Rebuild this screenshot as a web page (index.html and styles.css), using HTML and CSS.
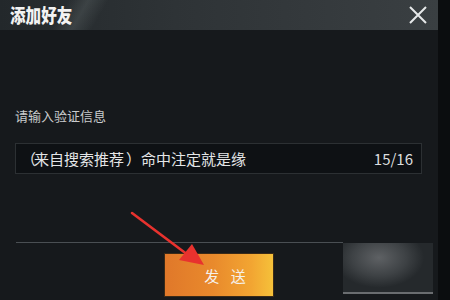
FILE: index.html
```html
<!DOCTYPE html>
<html lang="zh">
<head>
<meta charset="utf-8">
<link rel="stylesheet" href="styles.css">
</head>
<body>
<div class="dialog">
  <div class="header">
    <div class="stripe"></div>
    <span class="title">添加好友</span>
    <svg class="close" width="20" height="20" viewBox="0 0 20 20"><path d="M2 2 L18 18 M18 2 L2 18" stroke="#e6e8e9" stroke-width="2" fill="none"/></svg>
  </div>
  <div class="content">
    <div class="label">请输入验证信息</div>
    <div class="input">
      <div class="msg"><span class="po">（</span><span class="w1">来自搜索推荐</span><span class="pc">）</span><span class="w2">命中注定就是缘</span></div>
      <span class="count">15/16</span>
    </div>
  </div>
  <div class="footer">
    <div class="sep-row">
      <div class="sep"></div>
      <div class="blur"></div>
    </div>
    <div class="btn-row">
      <div class="btn">发&nbsp;送</div>
    </div>
  </div>
  <svg class="arrow" width="90" height="70" viewBox="0 0 90 70">
    <path d="M2 3 L58 45" stroke="#e8322e" stroke-width="2.6" stroke-linecap="round"/>
    <path d="M74 55 L49 50 L62 34 Z" fill="#e8322e"/>
  </svg>
</div>
</body>
</html>
```
FILE: styles.css
```css
html, body {
  margin: 0;
  padding: 0;
}
body {
  width: 450px;
  height: 300px;
  background: #0b0d0f;
  font-family: "Noto Sans CJK SC", "Noto Sans", sans-serif;
  overflow: hidden;
}
.dialog {
  position: relative;
  width: 438px;
  height: 300px;
  background: #16191c;
  display: flex;
  flex-direction: column;
}
.header {
  position: relative;
  height: 30px;
  background: linear-gradient(90deg, #23282b 0%, #2e3336 40%, #3a3f42 100%);
  display: flex;
  align-items: center;
  justify-content: space-between;
  padding: 0 10px 0 10px;
  overflow: hidden;
}
.stripe {
  position: absolute;
  left: 60px;
  top: 0;
  width: 40px;
  height: 30px;
  background: linear-gradient(90deg, rgba(255,255,255,0) 0%, rgba(120,130,130,0.25) 50%, rgba(255,255,255,0) 100%);
  transform: skewX(-30deg);
}
.title {
  position: relative;
  display: inline-block;
  color: #f2f2f2;
  font-size: 19px;
  font-weight: 900;
  line-height: 30px;
  transform: scaleX(0.82);
  transform-origin: left center;
}
.close {
  position: relative;
}
.content {
  padding: 77px 16px 0 15px;
  height: 136px;
  box-sizing: border-box;
}
.label {
  color: #c9cbcc;
  font-size: 13px;
  line-height: 17px;
}
.input {
  margin-top: 19px;
  width: 407px;
  height: 31px;
  box-sizing: border-box;
  background: #0e1114;
  border: 1px solid #2c3033;
  display: flex;
  align-items: center;
  justify-content: space-between;
  padding: 0 8px 0 0;
}
.msg {
  display: flex;
  align-items: center;
  color: #e4e6e7;
  font-size: 15px;
  white-space: nowrap;
}
.po {
  width: 18px;
  flex: none;
  padding-left: 5px;
  box-sizing: border-box;
}
.pc {
  flex: none;
  margin-left: 2px;
}
.count {
  color: #dcdedf;
  font-size: 15px;
}
.footer {
  margin-top: 76px;
  display: flex;
  flex-direction: column;
}
.sep-row {
  display: flex;
  height: 0;
}
.sep {
  margin-left: 16px;
  width: 327px;
  height: 1px;
  background: #4a4f53;
}
.blur {
  position: absolute;
  left: 343px;
  top: 243px;
  width: 90px;
  height: 51px;
  background: radial-gradient(ellipse 45px 30px at 40% 30%, #5e6164 0%, #3e4245 60%, #25292c 100%);
  border-bottom: 2px solid #6a6d70;
  box-sizing: border-box;
}
.btn-row {
  display: flex;
  padding-left: 164px;
  margin-top: 11px;
}
.btn {
  width: 110px;
  height: 44px;
  box-sizing: border-box;
  border: 1px solid #3a2a18;
  background: linear-gradient(90deg, #e0782a 0%, #e98a2c 45%, #f2a532 80%, #f5c13a 100%);
  color: #f6f1ea;
  font-size: 15px;
  letter-spacing: 4px;
  display: flex;
  align-items: center;
  justify-content: center;
  padding-left: 16px;
}
.arrow {
  position: absolute;
  left: 130px;
  top: 210px;
}
```
